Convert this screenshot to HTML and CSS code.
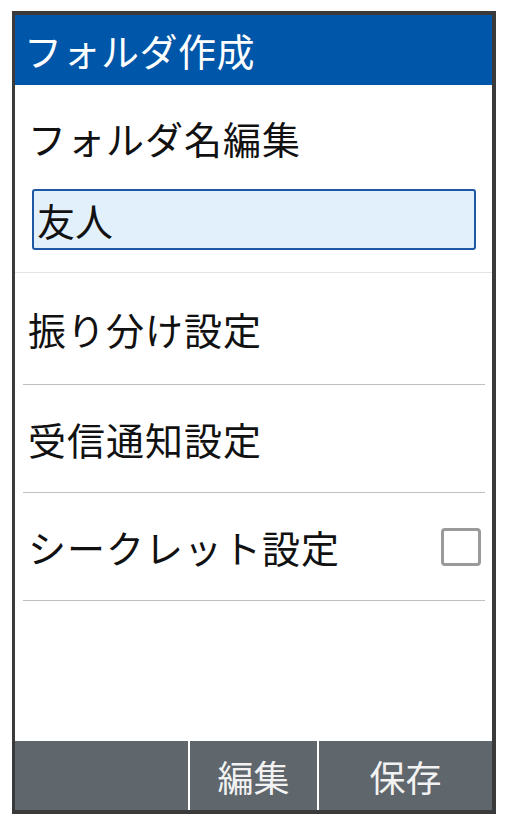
FILE: index.html
```html
<!DOCTYPE html>
<html lang="ja">
<head>
<meta charset="utf-8">
<link rel="stylesheet" href="styles.css">
</head>
<body>
<div class="phone">
  <header class="titlebar">フォルダ作成</header>
  <main class="content">
    <section class="edit">
      <div class="edit-label">フォルダ名編集</div>
      <div class="input">友人</div>
    </section>
    <div class="row"><span>振り分け設定</span></div>
    <div class="row"><span>受信通知設定</span></div>
    <div class="row"><span>シークレット設定</span><span class="check"></span></div>
  </main>
  <footer class="softkeys">
    <div class="key key-left"></div>
    <div class="key key-mid">編集</div>
    <div class="key key-right">保存</div>
  </footer>
</div>
</body>
</html>
```

FILE: styles.css
```css
html, body {
  margin: 0;
  padding: 0;
  background: #ffffff;
}
body {
  font-family: "Noto Sans CJK JP", "Noto Sans", sans-serif;
  color: #111;
}
.phone {
  margin: 11px 0 0 12px;
  width: 477px;
  height: 795px;
  border-style: solid;
  border-color: #3a3a3a;
  border-width: 4px 4px 4px 3px;
  display: flex;
  flex-direction: column;
  background: #fff;
}
.titlebar {
  height: 70px;
  background: #0056a8;
  color: #fff;
  font-size: 38px;
  line-height: 70px;
  padding-left: 9px;
  letter-spacing: 0.5px;
}
.content {
  flex: 1;
  display: flex;
  flex-direction: column;
}
.edit {
  padding: 28px 16px 22px 17px;
  border-bottom: 1px solid #e2e4e4;
  display: flex;
  flex-direction: column;
  gap: 26px;
}
.edit-label {
  font-size: 38px;
  line-height: 50px;
  padding-left: 13px;
  margin-left: -17px;
  letter-spacing: 1px;
}
.input {
  height: 57px;
  border: 2px solid #1c58a4;
  border-radius: 3px;
  background: #e2f0fc;
  font-size: 38px;
  line-height: 57px;
  padding-left: 3px;
}
.row {
  height: 107px;
  margin: 0 7px 0 8px;
  border-bottom: 1px solid #bcc2c2;
  display: flex;
  align-items: center;
  justify-content: space-between;
  font-size: 38px;
  padding-left: 5px;
  letter-spacing: 1px;
}
.edit + .row {
  height: 111px;
}
.check {
  width: 34px;
  height: 32px;
  border: 3px solid #9a9a9a;
  border-radius: 4px;
  margin-right: 4px;
}
.softkeys {
  height: 69px;
  background: #5f666c;
  display: flex;
}
.key {
  color: #f2f2f2;
  font-size: 36px;
  display: flex;
  align-items: center;
  justify-content: center;
}
.key-left {
  width: 173px;
  border-right: 2px solid #fff;
}
.key-mid {
  width: 127px;
  border-right: 2px solid #fff;
}
.key-right {
  flex: 1;
}
```
